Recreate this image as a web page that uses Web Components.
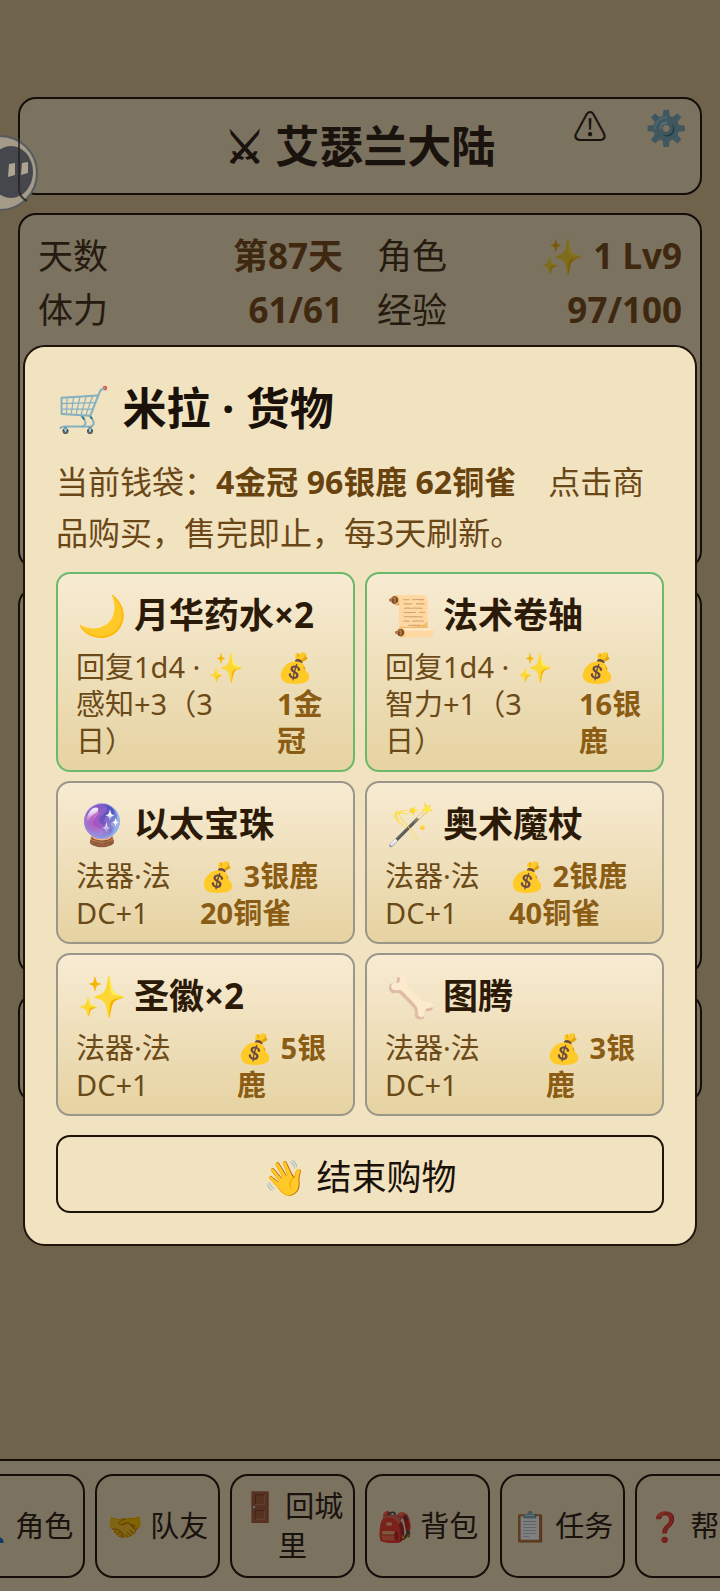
<!DOCTYPE html>
<html lang="zh-CN">
<head>
<meta charset="utf-8">
<meta name="viewport" content="width=device-width, initial-scale=1">
<title>艾瑟兰大陆</title>
<style>
  * { box-sizing: border-box; }
  body {
    margin: 0;
    min-height: 100vh;
    display: flex;
    flex-direction: column;
    overflow-x: hidden;
    background: #dec698;
    color: #34261a;
    font-family: "Noto Sans", "Noto Sans CJK SC", sans-serif;

    --panel: #f7e5c0;
    --line: #2a1c10;
    --gold: #7e5020;
  }
  main {
    display: flex;
    flex-direction: column;
    gap: 18px;
    padding: 97px 18px 18px;
  }
  .stats { min-height: 356px; }
  .quest { min-height: 388px; }
  .log { min-height: 110px; }
  bottom-nav { margin-top: auto; }
</style>
</head>
<body>
  <main>
    <game-header>
      ⚔ 艾瑟兰大陆
      <button slot="actions" aria-label="公告">⚠</button>
      <button slot="actions" aria-label="设置">⚙️</button>
    </game-header>
    <game-panel class="stats">
      <stat-row label="天数">第87天</stat-row>
      <stat-row label="角色">✨ 1 Lv9</stat-row>
      <stat-row label="体力">61/61</stat-row>
      <stat-row label="经验">97/100</stat-row>
    </game-panel>
    <game-panel class="quest"></game-panel>
    <game-panel class="log"></game-panel>
  </main>

  <bottom-nav>
    <nav-item>👤 角色</nav-item>
    <nav-item>🤝 队友</nav-item>
    <nav-item>🚪 回城里</nav-item>
    <nav-item>🎒 背包</nav-item>
    <nav-item>📋 任务</nav-item>
    <nav-item>❓ 帮助</nav-item>
  </bottom-nav>

  <shop-dialog heading="🛒 米拉 · 货物" money="4金冠 96银鹿 62铜雀">
    <shop-item icon="🌙" name="月华药水×2" price="💰 1金冠" rare style="--price: 58px">回复1d4 · ✨感知+3（3日）</shop-item>
    <shop-item icon="📜" name="法术卷轴" price="💰 16银鹿" rare style="--price: 65px">回复1d4 · ✨智力+1（3日）</shop-item>
    <shop-item icon="🔮" name="以太宝珠" price="💰 3银鹿20铜雀" style="--price: 135px">法器·法DC+1</shop-item>
    <shop-item icon="🪄" name="奥术魔杖" price="💰 2银鹿40铜雀" style="--price: 135px">法器·法DC+1</shop-item>
    <shop-item icon="✨" name="圣徽×2" price="💰 5银鹿" style="--price: 98px">法器·法DC+1</shop-item>
    <shop-item icon="🦴" name="图腾" price="💰 3银鹿" style="--price: 98px">法器·法DC+1</shop-item>
  </shop-dialog>

  <assist-bubble></assist-bubble>

<script>
// Title bar with the action buttons on its right side
class GameHeader extends HTMLElement {
  constructor() {
    super();
    this.attachShadow({ mode: 'open' });
  }

  connectedCallback() {
    this.shadowRoot.innerHTML = `
    <style>
      :host {
        display: grid;
        grid-template-columns: 1fr auto 1fr;
        box-sizing: border-box;
        min-height: 98px;
        background: var(--panel);
        border: 2px solid var(--line);
        border-radius: 18px;
      }
      h1 {
        grid-column: 2;
        align-self: center;
        margin: 0;
        font-size: 44px;
        line-height: 60px;
      }
      .actions {
        display: flex;
        justify-content: flex-end;
        align-items: flex-start;
        gap: 28px;
        padding: 4px 10px;
      }
      ::slotted(button) {
        width: 48px;
        height: 48px;
        padding: 0;
        border: 0;
        background: none;
        color: inherit;
        font: 34px/48px "Noto Sans", "Noto Sans CJK SC", sans-serif;
        cursor: pointer;
      }
    </style>
    <h1><slot></slot></h1>
    <div class="actions"><slot name="actions"></slot></div>
  `;
  }
}
customElements.define("game-header", GameHeader);


// Rounded box, lays its rows out in two columns
class GamePanel extends HTMLElement {
  constructor() {
    super();
    this.attachShadow({ mode: 'open' });
  }

  connectedCallback() {
    this.shadowRoot.innerHTML = `
    <style>
      :host {
        display: grid;
        grid-template-columns: 1fr 1fr;
        align-content: start;
        column-gap: 34px;
        box-sizing: border-box;
        padding: 14px 18px;
        background: var(--panel);
        border: 2px solid var(--line);
        border-radius: 18px;
      }
    </style>
    <slot></slot>
  `;
  }
}
customElements.define("game-panel", GamePanel);


class StatRow extends HTMLElement {
  constructor() {
    super();
    this.attachShadow({ mode: 'open' });
  }

  connectedCallback() {
    this.shadowRoot.innerHTML = `
    <style>
      :host {
        display: flex;
        justify-content: space-between;
        color: #4a371c;
        font-size: 35px;
        line-height: 54px;
      }
      b { color: var(--gold); }
    </style>
    <span>${this.getAttribute("label")}</span>
    <b><slot></slot></b>
  `;
  }
}
customElements.define("stat-row", StatRow);


// Bottom bar, scrolls sideways when the items do not fit
class BottomNav extends HTMLElement {
  constructor() {
    super();
    this.attachShadow({ mode: 'open' });
  }

  connectedCallback() {
    this.shadowRoot.innerHTML = `
    <style>
      :host {
        display: block;
        background: var(--panel);
        border-top: 2px solid var(--line);
      }
      nav {
        display: flex;
        gap: 10px;
        padding: 13px 12px;
        overflow-x: auto;
        scrollbar-width: none;
      }
    </style>
    <nav><slot></slot></nav>
  `;
    this.shadowRoot.querySelector('nav').scrollLeft = 52;
  }
}

class NavItem extends HTMLElement {
  constructor() {
    super();
    this.attachShadow({ mode: 'open' });
  }

  connectedCallback() {
    this.shadowRoot.innerHTML = `
    <style>
      :host {
        display: block;
        flex: 0 0 125px;
      }
      button {
        display: block;
        box-sizing: border-box;
        width: 100%;
        height: 104px;
        padding: 0 8px;
        background: var(--panel);
        border: 2px solid var(--line);
        border-radius: 18px;
        color: inherit;
        font-family: inherit;
        font-size: 29px;
        line-height: 40px;
        cursor: pointer;
      }
    </style>
    <button><slot></slot></button>
  `;
  }
}
// items first, so that the bar already has its full width when it scrolls
customElements.define("nav-item", NavItem);
customElements.define("bottom-nav", BottomNav);


class ShopItem extends HTMLElement {
  constructor() {
    super();
    this.attachShadow({ mode: 'open' });
  }

  connectedCallback() {
    const icon = this.getAttribute("icon");
    const name = this.getAttribute("name");
    const price = this.getAttribute("price");

    this.shadowRoot.innerHTML = `
    <style>
      :host { display: block; }
      button {
        display: flex;
        flex-direction: column;
        box-sizing: border-box;
        width: 100%;
        height: 100%;
        padding: 9px 18px 11px;
        background: linear-gradient(#f7ebd2, #e6d3a2);
        border: 2px solid #9a978a;
        border-radius: 14px;
        color: #6b4a18;
        font-family: inherit;
        font-size: 29px;
        line-height: 37px;
        text-align: left;
        cursor: pointer;
      }
      :host([rare]) button { border-color: #6cb96e; }
      .title {
        display: flex;
        align-items: center;
        gap: 6px;
        height: 62px;
        margin-bottom: 3px;
        color: #2c1a08;
        font-size: 35px;
        font-weight: bold;
      }
      .icon {
        width: 52px;
        font-size: 40px;
        font-weight: normal;
        text-align: center;
      }
      .info {
        display: grid;
        grid-template-columns: 1fr var(--price, auto);
        gap: 22px;
      }
      .price {
        color: #8a5c14;
        font-weight: bold;
      }
    </style>
    <button>
      <span class="title"><span class="icon">${icon}</span><span>${name}</span></span>
      <span class="info">
        <span><slot></slot></span>
        <span class="price">${price}</span>
      </span>
    </button>
  `;
  }
}
customElements.define("shop-item", ShopItem);


class ShopDialog extends HTMLElement {
  constructor() {
    super();
    this.attachShadow({ mode: 'open' });
  }

  connectedCallback() {
    this.shadowRoot.innerHTML = `
    <style>
      /* the host is the dimmed backdrop */
      :host {
        position: fixed;
        inset: 0;
        display: flex;
        align-items: center;
        padding: 0 23px;
        background: rgba(0, 0, 0, 0.5);
      }
      .box {
        flex: 1;
        box-sizing: border-box;
        padding: 31px;
        background: #f1e3c0;
        border: 2px solid #1e140a;
        border-radius: 22px;
        color: #6b4718;
      }
      h2 {
        margin: 0 0 18px;
        color: #1a120a;
        font-size: 44px;
        line-height: 60px;
      }
      p {
        margin: 0 0 14px;
        font-size: 32px;
        line-height: 51px;
      }
      p b { color: #68430f; }
      .goods {
        display: grid;
        grid-template-columns: 1fr 1fr;
        gap: 9px 10px;
      }
      .close {
        display: block;
        width: 100%;
        height: 78px;
        margin-top: 19px;
        padding: 0;
        background: none;
        border: 2px solid #1e140a;
        border-radius: 14px;
        color: #1a120a;
        font-family: inherit;
        font-size: 35px;
        cursor: pointer;
      }
    </style>
    <div class="box" role="dialog" aria-modal="true" aria-labelledby="heading">
      <h2 id="heading">${this.getAttribute("heading")}</h2>
      <p>当前钱袋：<b>${this.getAttribute("money")}</b>　点击商品购买，售完即止，每3天刷新。</p>
      <div class="goods"><slot></slot></div>
      <button class="close">👋 结束购物</button>
    </div>
  `;

    this.shadowRoot.querySelector('.close').addEventListener('click', () => this.remove());
  }
}
customElements.define("shop-dialog", ShopDialog);


// Floating helper, half hidden behind the left edge of the window
class AssistBubble extends HTMLElement {
  constructor() {
    super();
    this.attachShadow({ mode: 'open' });
  }

  connectedCallback() {
    this.shadowRoot.innerHTML = `
    <style>
      :host {
        position: fixed;
        top: 135px;
        left: -38px;
      }
      svg { display: block; }
    </style>
    <svg width="76" height="76" viewBox="0 0 76 76" aria-hidden="true">
      <circle cx="38" cy="38" r="37" fill="#a39b88" stroke="#565a60" stroke-width="2"/>
      <ellipse cx="49" cy="37" rx="22" ry="26" fill="#45474c"/>
      <path d="M47 29l6-1v12l-7 2zM60 28l6-1v11l-7 2z" fill="#aca491"/>
      <path d="M57 3v51q0 8 8 12" fill="none" stroke="#25211f" stroke-width="2" stroke-opacity="0.8"/>
    </svg>
  `;
  }
}
customElements.define("assist-bubble", AssistBubble);
</script>
</body>
</html>
